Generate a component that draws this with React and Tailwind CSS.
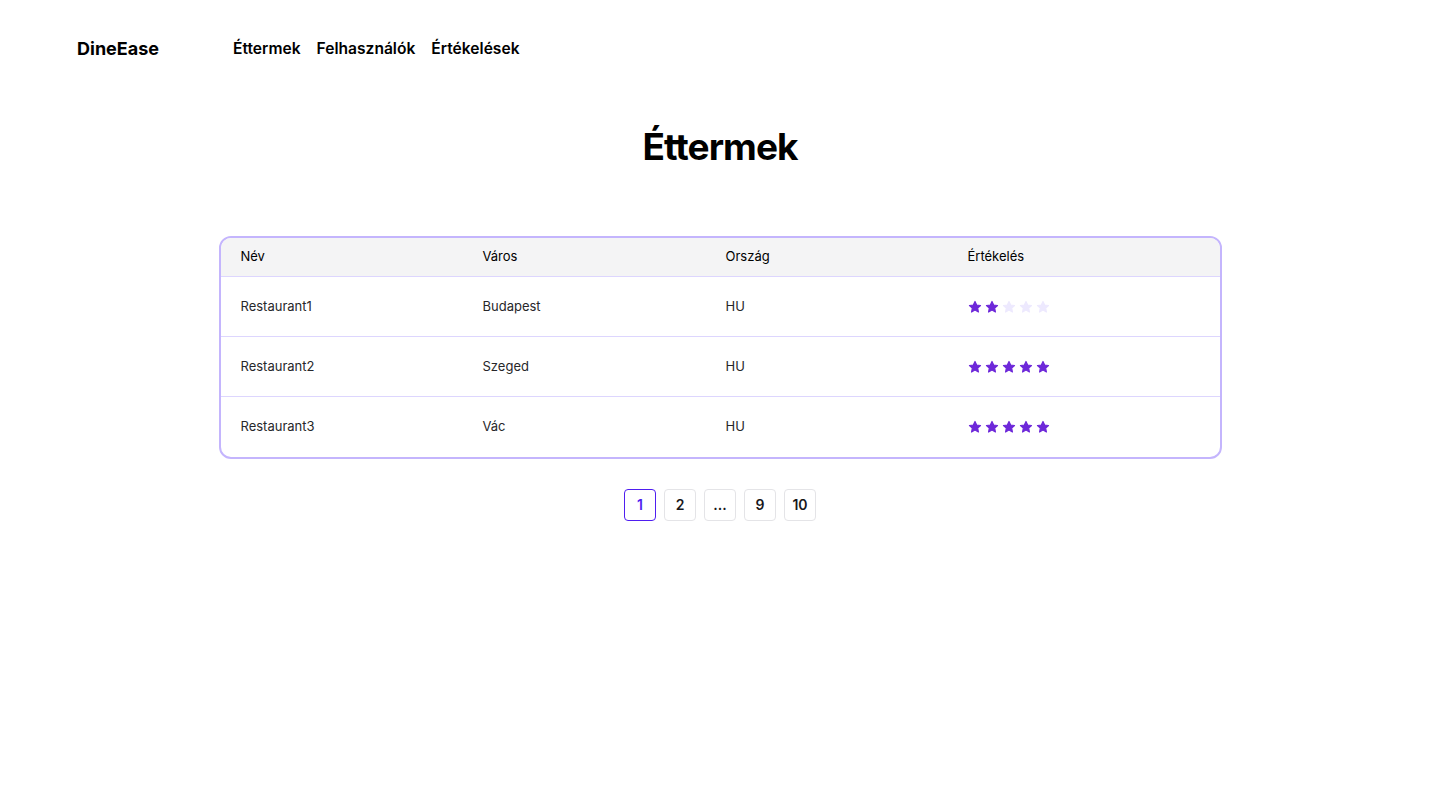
import React from 'react'

const rows = [
  { name: 'Restaurant1', city: 'Budapest', country: 'HU', rating: 2 },
  { name: 'Restaurant2', city: 'Szeged', country: 'HU', rating: 5 },
  { name: 'Restaurant3', city: 'Vác', country: 'HU', rating: 5 },
]

const Star = ({ on }) => (
  <svg width="14" height="14" viewBox="0 0 24 24" className={on ? 'text-[#6d28d9]' : 'text-[#ede9fe]'}>
    <path fill="currentColor" stroke="currentColor" strokeWidth="2" strokeLinejoin="round" d="M12 2.5l2.9 6.1 6.6.8-4.9 4.6 1.3 6.6L12 17.3l-5.9 3.3 1.3-6.6-4.9-4.6 6.6-.8z" />
  </svg>
)

const cols = 'grid grid-cols-[242px_243px_242px_1fr] px-5'

export default function App() {
  return (
    <div className="min-h-screen bg-white text-black font-['Inter',sans-serif]">
      <header className="flex items-center h-[97px] px-[77px]">
        <div className="text-lg font-bold w-[156px]">DineEase</div>
        <nav className="flex gap-4 text-[15.6px] font-semibold">
          <a>Éttermek</a>
          <a>Felhasználók</a>
          <a>Értékelések</a>
        </nav>
      </header>

      <h1 className="text-center text-[37px] leading-10 font-bold tracking-tight mt-[30px]">Éttermek</h1>

      <div className="mx-auto w-[1003px] mt-[69px] border-2 border-[#c4b5fd] rounded-xl overflow-hidden">
        <div className={`${cols} h-[39px] items-center bg-[#f4f4f5] text-[13px] border-b border-[#ddd6fe]`}>
          <div>Név</div>
          <div>Város</div>
          <div>Ország</div>
          <div>Értékelés</div>
        </div>
        {rows.map((r, i) => (
          <div key={r.name} className={`${cols} h-[60px] items-center text-[13px] text-[#27272a] ${i < rows.length - 1 ? 'border-b border-[#ddd6fe]' : ''}`}>
            <div>{r.name}</div>
            <div>{r.city}</div>
            <div>{r.country}</div>
            <div className="flex gap-[3px]">
              {[0, 1, 2, 3, 4].map(n => <Star key={n} on={n < r.rating} />)}
            </div>
          </div>
        ))}
      </div>

      <div className="flex justify-center gap-2 mt-[30px] text-sm font-semibold">
        <div className="w-8 h-8 flex items-center justify-center rounded border border-[#4f1ef0] text-[#4f1ef0]">1</div>
        {['2', '...', '9', '10'].map(p => (
          <div key={p} className="w-8 h-8 flex items-center justify-center rounded border border-[#e4e4e7] text-[#18181b]">{p}</div>
        ))}
      </div>
    </div>
  )
}
